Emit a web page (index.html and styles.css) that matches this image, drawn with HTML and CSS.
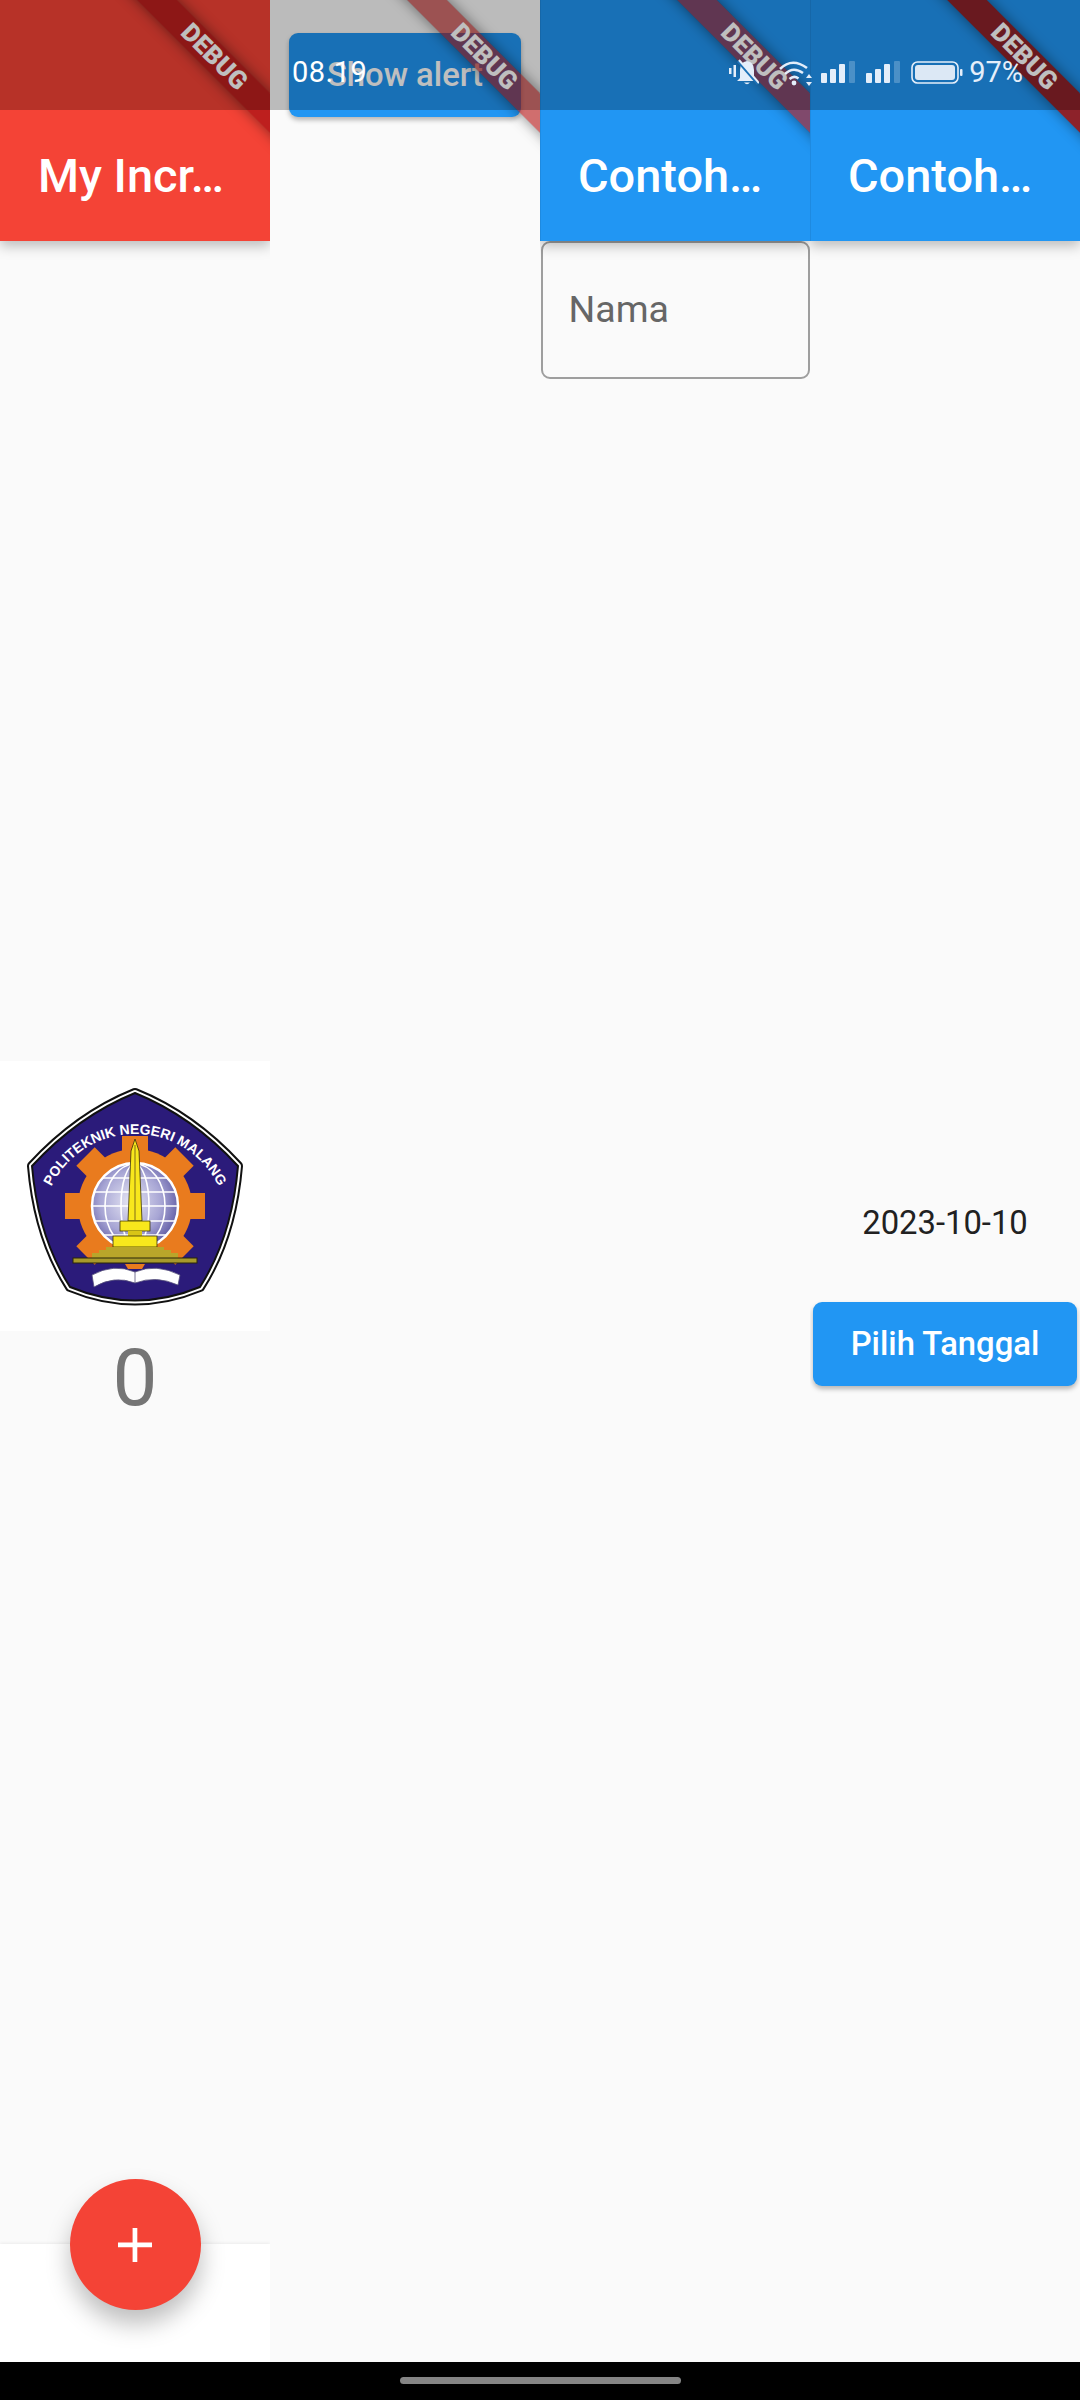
FILE: index.html
```html
<!DOCTYPE html>
<html lang="en">
<head>
  <meta charset="UTF-8" />
  <meta name="viewport" content="width=device-width, initial-scale=1.0" />
  <title>Flutter demos</title>
  <link rel="stylesheet" href="styles.css">
</head>
<body>
  <div class="screen">
    <div class="columns">

      <!-- counter -->
      <div class="col">
        <div class="appbar red"><span class="title">My Incr…</span></div>
        <div class="body center">
          <div class="logo">
            <svg viewBox="0 0 270 270" width="270" height="270">
              <defs>
                <radialGradient id="globe" cx="0.45" cy="0.45" r="0.6">
                  <stop offset="0" stop-color="#e6e6f4" />
                  <stop offset="0.6" stop-color="#a7a5d4" />
                  <stop offset="1" stop-color="#5a55a0" />
                </radialGradient>
                <path id="arc" d="M42 166 A93 93 0 0 1 228 166" />
                <path id="shield" d="M135 32 Q192 55 238 105 Q232 176 200 226 Q135 253 70 226 Q38 176 32 105 Q78 55 135 32 Z" />
              </defs>
              <use href="#shield" fill="none" stroke="#111" stroke-width="10" stroke-linejoin="round" />
              <use href="#shield" fill="none" stroke="#fff" stroke-width="6" stroke-linejoin="round" />
              <use href="#shield" fill="#2b1b7a" stroke="#111" stroke-width="2" />
              <text class="logo-text"><textPath href="#arc" startOffset="50%" text-anchor="middle">POLITEKNIK NEGERI MALANG</textPath></text>

              <g fill="#e97b1e">
                <circle cx="135" cy="145" r="57" />
                <rect x="122" y="75" width="26" height="30" />
                <rect x="122" y="75" width="26" height="30" transform="rotate(45 135 145)" />
                <rect x="122" y="75" width="26" height="30" transform="rotate(90 135 145)" />
                <rect x="122" y="75" width="26" height="30" transform="rotate(135 135 145)" />
                <rect x="122" y="75" width="26" height="30" transform="rotate(225 135 145)" />
                <rect x="122" y="75" width="26" height="30" transform="rotate(270 135 145)" />
                <rect x="122" y="75" width="26" height="30" transform="rotate(315 135 145)" />
              </g>

              <circle cx="135" cy="145" r="43" fill="url(#globe)" stroke="#fff" stroke-width="2.5" />
              <g fill="none" stroke="#fff" stroke-width="1.6">
                <ellipse cx="135" cy="145" rx="14" ry="42" />
                <ellipse cx="135" cy="145" rx="30" ry="42" />
                <path d="M94 131 H176 M92 145 H178 M94 160 H176 M103 117 H167 M104 174 H166" />
              </g>

              <path d="M135 78 L139 90 L142 160 H128 L131 90 Z" fill="#f8e71c" stroke="#3a3208" stroke-width="0.8" />
              <path d="M135 84 V160" stroke="#a8951a" stroke-width="1.5" />
              <rect x="120" y="160" width="30" height="10" fill="#f8e71c" stroke="#3a3208" stroke-width="0.8" />
              <rect x="128" y="170" width="14" height="5" fill="#d8c516" />
              <rect x="113" y="175" width="44" height="11" fill="#f8e71c" stroke="#3a3208" stroke-width="0.8" />
              <path d="M106 186 H164 V189 H171 V192 H178 V197 H92 V192 H99 V189 H106 Z" fill="#b9a62a" />
              <rect x="73" y="197" width="124" height="5" fill="#a89a2c" stroke="#2a2608" stroke-width="1" />
              <path d="M125 203 H145 L142 208 H128 Z" fill="#e97b1e" />
              <path d="M92 214 Q114 202 135 211 Q156 202 180 214 L178 224 Q156 214 135 222 Q114 214 94 226 Z" fill="#fff" stroke="#55507a" stroke-width="0.8" />
              <path d="M135 211 V222" stroke="#55507a" stroke-width="0.8" />
            </svg>
          </div>
          <div class="count">0</div>
        </div>
        <div class="bottombar"></div>
        <button class="fab">
          <svg viewBox="0 0 34 34" width="34" height="34"><path d="M14.6 0h4.7v14.6H34v4.7H19.3V34h-4.7V19.3H0v-4.7h14.6z" fill="#fff" /></svg>
        </button>
        <div class="ribbon ribbon-red"><span>DEBUG</span></div>
      </div>

      <!-- alert -->
      <div class="col col-alert">
        <div class="body">
          <button class="btn">Show alert</button>
        </div>
        <div class="ribbon"><span>DEBUG</span></div>
      </div>

      <!-- text field -->
      <div class="col">
        <div class="appbar blue"><span class="title">Contoh…</span></div>
        <div class="body">
          <div class="field">Nama</div>
        </div>
        <div class="ribbon"><span>DEBUG</span></div>
      </div>

      <!-- date picker -->
      <div class="col">
        <div class="appbar blue"><span class="title">Contoh…</span></div>
        <div class="body center">
          <div class="date">2023-10-10</div>
          <div class="tap-target"><button class="btn">Pilih Tanggal</button></div>
        </div>
        <div class="ribbon ribbon-strong"><span>DEBUG</span></div>
      </div>
    </div>

    <div class="navbar"><div class="pill"></div></div>

    <div class="status">
      <span class="time">08.19</span>
      <div class="status-right">
        <svg class="ic-bell" viewBox="0 0 30 26" width="30" height="26" fill="#e4eefa">
          <rect x="0" y="9" width="2.5" height="6" />
          <rect x="4.5" y="6" width="2.5" height="12" />
          <path d="M11 19 V11 Q11 3 18 2 Q25 3 25 11 V19 L28 22 H8 Z" />
          <path d="M15 23.5 H21 Q18 27 15 23.5 Z" />
          <path d="M9 2 L29 25" stroke="#1b70b6" stroke-width="3" />
          <path d="M10 1 L30 24" stroke="#e4eefa" stroke-width="2" />
        </svg>
        <svg class="ic-wifi" viewBox="0 0 33 27" width="33" height="27" fill="none" stroke="#e4eefa" stroke-width="2.6">
          <path d="M1 10 Q13 -2 28 9" />
          <path d="M6 15 Q14 7 24 14" />
          <path d="M10.5 20 Q15 16 19.5 19.5" />
          <circle cx="15" cy="24" r="2.4" fill="#e4eefa" stroke="none" />
          <path d="M30 15 L33 19 H27 Z M30 27 L33 23 H27 Z" fill="#e4eefa" stroke="none" />
        </svg>
        <svg class="ic-signal" viewBox="0 0 34 22" width="34" height="22" fill="#e4eefa">
          <rect x="0" y="12" width="6" height="10" rx="1" />
          <rect x="9" y="8" width="6" height="14" rx="1" />
          <rect x="18" y="3" width="6" height="19" rx="1" />
          <rect x="28" y="0" width="6" height="22" rx="1" opacity="0.25" />
        </svg>
        <svg class="ic-signal" viewBox="0 0 34 22" width="34" height="22" fill="#e4eefa">
          <rect x="0" y="12" width="6" height="10" rx="1" />
          <rect x="9" y="8" width="6" height="14" rx="1" />
          <rect x="18" y="3" width="6" height="19" rx="1" />
          <rect x="28" y="0" width="6" height="22" rx="1" opacity="0.25" />
        </svg>
        <svg class="ic-battery" viewBox="0 0 52 23" width="52" height="23">
          <rect x="1" y="1" width="46" height="21" rx="5.5" fill="none" stroke="#e4eefa" stroke-width="1.6" />
          <rect x="4" y="4" width="40" height="15" rx="3" fill="#dce8f5" />
          <rect x="49" y="8" width="2.5" height="7" rx="1" fill="#e4eefa" />
        </svg>
        <span class="percent">97%</span>
      </div>
    </div>
  </div>
</body>
</html>
```

FILE: styles.css
```css
* {
  box-sizing: border-box;
}
body {
  margin: 0;
  background: #000;
  font-family: Roboto, sans-serif;
}
button {
  font-family: inherit;
  border: none;
  margin: 0;
  padding: 0;
}
.screen {
  position: relative;
  width: 1080px;
  height: 2400px;
  display: flex;
  flex-direction: column;
  overflow: hidden;
}
.columns {
  flex: 1;
  display: flex;
  min-height: 0;
}
.col {
  position: relative;
  width: 270px;
  display: flex;
  flex-direction: column;
  background: #fafafa;
  overflow: hidden;
}
.appbar {
  position: relative;
  z-index: 1;
  height: 241px;
  padding: 110px 38px 0;
  display: flex;
  align-items: center;
  box-shadow: 0 5px 12px rgba(0, 0, 0, 0.25);
}
.appbar.red {
  background: #f44336;
}
.appbar.blue {
  background: #2196f3;
  border-left: 1px solid rgba(0, 0, 0, 0.08);
  padding-left: 37px;
}
.title {
  color: #fff;
  font-size: 46.9px;
  font-weight: 500;
  white-space: nowrap;
}
.body {
  flex: 1;
  display: flex;
  flex-direction: column;
  min-height: 0;
}
.body.center {
  align-items: center;
  justify-content: center;
}
.logo {
  width: 270px;
  height: 270px;
  background: #fff;
}
.logo svg {
  display: block;
}
.logo-text {
  fill: #fff;
  font-family: "Liberation Sans", sans-serif;
  font-weight: bold;
  font-size: 14px;
}
.count {
  font-size: 80px;
  line-height: 94px;
  color: #757575;
}
.bottombar {
  height: 118px;
  background: #fff;
  box-shadow: 0 -1px 3px rgba(0, 0, 0, 0.06);
}
.fab {
  position: absolute;
  left: 69.5px;
  bottom: 52px;
  width: 131px;
  height: 131px;
  border-radius: 50%;
  background: #f44336;
  display: flex;
  align-items: center;
  justify-content: center;
  box-shadow: 0 14px 24px rgba(0, 0, 0, 0.26);
}
.fab svg {
  display: block;
}
.btn {
  height: 84px;
  padding: 0 38px;
  background: #2196f3;
  color: #fff;
  font-size: 32.8px;
  font-weight: 500;
  border-radius: 9px;
  box-shadow: 0 3px 5px rgba(0, 0, 0, 0.28);
  white-space: nowrap;
}
.col-alert .body {
  align-items: center;
  padding-top: 33px;
}
.col-alert .btn {
  width: 232px;
  padding: 0;
}
.field {
  height: 138px;
  margin: 0 0.5px;
  padding: 0 0 2px 26px;
  display: flex;
  align-items: center;
  border: 2.8px solid #9e9e9e;
  border-radius: 9px;
  color: #666;
  font-size: 37.5px;
}
.date {
  font-size: 32.8px;
  line-height: 38px;
  color: #212121;
}
.tap-target {
  padding: 14px 0;
  margin-top: 46px;
}
.tap-target .btn {
  width: 264px;
  padding: 0;
  display: block;
}
.ribbon {
  position: absolute;
  left: 64px;
  top: 43px;
  width: 300px;
  height: 28px;
  z-index: 2;
  display: flex;
  align-items: center;
  justify-content: center;
  background: rgba(183, 28, 28, 0.63);
  box-shadow: 0 0 14px rgba(0, 0, 0, 0.45);
  transform: rotate(45deg);
}
.ribbon-red {
  background: rgba(183, 28, 28, 0.9);
}
.ribbon-strong {
  background: rgba(145, 30, 35, 0.97);
}
.ribbon span {
  color: #fff;
  font-size: 25.5px;
  font-weight: 900;
  line-height: 1;
}
.navbar {
  height: 38px;
  background: #000;
  display: flex;
  justify-content: center;
  padding-top: 15px;
}
.pill {
  width: 281px;
  height: 7px;
  border-radius: 4px;
  background: #858585;
}
.status {
  position: absolute;
  left: 0;
  top: 0;
  width: 100%;
  height: 110px;
  z-index: 5;
  padding: 52px 57px 0 292px;
  background: rgba(0, 0, 0, 0.25);
  display: flex;
  justify-content: space-between;
  align-items: flex-start;
  color: #fff;
  font-size: 29px;
  line-height: 40px;
}
.time {
  letter-spacing: 0.5px;
}
.status-right {
  display: flex;
  align-items: center;
  height: 40px;
  color: #e4eefa;
}
.status-right svg {
  display: block;
  flex: none;
}
.ic-bell {
  margin-right: 20px;
}
.ic-wifi {
  margin-right: 9px;
}
.ic-signal {
  margin-right: 11px;
}
.ic-battery {
  margin-right: 6px;
}
```
